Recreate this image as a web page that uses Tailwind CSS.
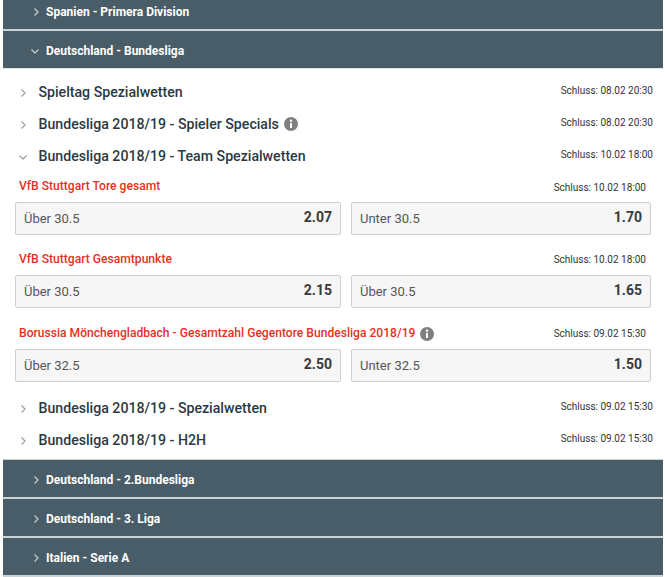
<!DOCTYPE html>
<html lang="en">

<head>
    <meta charset="UTF-8">
    <meta name="viewport" content="width=device-width, initial-scale=1.0">
    <title>Wetten</title>
    <script src="https://cdn.jsdelivr.net/npm/@tailwindcss/browser@4"></script>
</head>

<body class="bg-white font-['Roboto',sans-serif] overflow-hidden">
    <div class="w-[665px] h-[577px] overflow-hidden pl-[3px] pr-[2px]">
        <!-- Top leagues -->
        <div class="h-[29px] bg-[#485d68] flex items-center pl-[27px] text-white text-[12px] font-bold">
            <svg class="w-[12px] h-[12px] mr-[4px] -mt-[6px]" viewBox="0 0 12 12" fill="none" stroke="#c3cbcf" stroke-width="1.3"><path d="M4.5 2.5 8 6 4.5 9.5" /></svg>
            <span class="mt-[-6px]">Spanien - Primera Division</span>
        </div>
        <div class="h-[2px] bg-[#c9d3d6]"></div>
        <div class="h-[37px] bg-[#485d68] flex items-center pl-[26px] pt-[2px] text-white text-[12px] font-bold">
            <svg class="w-[12px] h-[12px] mr-[5px]" viewBox="0 0 12 12" fill="none" stroke="#c3cbcf" stroke-width="1.3"><path d="M2.5 4.5 6 8 9.5 4.5" /></svg>
            <span>Deutschland - Bundesliga</span>
        </div>

        <!-- Markets -->
        <div class="h-[391px]">
            <div class="h-[1px] bg-[#dfe5e7]"></div>
            <div class="h-[7px]"></div>
            <div class="h-[32px] flex items-center pl-[14px] pr-[10px]">
                <svg class="w-[12px] h-[12px] mr-[9.5px] mt-[2px]" viewBox="0 0 12 12" fill="none" stroke="#a3a3a3" stroke-width="1.3"><path d="M4.5 2.5 8 6 4.5 9.5" /></svg>
                <span class="text-[14.15px] font-medium text-[#2b3a42] mt-[2px]">Spieltag Spezialwetten</span>
                <span class="ml-auto text-[10px] text-[#333] -mt-[3px]">Schluss: 08.02 20:30</span>
            </div>
            <div class="h-[32px] flex items-center pl-[14px] pr-[10px]">
                <svg class="w-[12px] h-[12px] mr-[9.5px] mt-[2px]" viewBox="0 0 12 12" fill="none" stroke="#a3a3a3" stroke-width="1.3"><path d="M4.5 2.5 8 6 4.5 9.5" /></svg>
                <span class="text-[14.15px] font-medium text-[#2b3a42] mt-[2px]">Bundesliga 2018/19 - Spieler Specials</span>
                <svg class="w-[14px] h-[14px] ml-[5px]" viewBox="0 0 14 14"><circle cx="7" cy="7" r="7" fill="#808080" /><circle cx="7" cy="3.8" r="1.2" fill="#fff" /><rect x="6" y="6" width="2" height="5" fill="#fff" /></svg>
                <span class="ml-auto text-[10px] text-[#333] -mt-[3px]">Schluss: 08.02 20:30</span>
            </div>
            <div class="h-[32px] flex items-center pl-[14px] pr-[10px]">
                <svg class="w-[12px] h-[12px] mr-[9.5px] mt-[2px]" viewBox="0 0 12 12" fill="none" stroke="#a3a3a3" stroke-width="1.3"><path d="M2.5 4.5 6 8 9.5 4.5" /></svg>
                <span class="text-[14.15px] font-medium text-[#2b3a42] mt-[2px]">Bundesliga 2018/19 - Team Spezialwetten</span>
                <span class="ml-auto text-[10px] text-[#333] -mt-[3px]">Schluss: 10.02 18:00</span>
            </div>

            <!-- VfB Stuttgart Tore gesamt -->
            <div class="pl-[12px]">
                <div class="h-[30px] flex items-center pl-[4px] pr-[17px]">
                    <span class="text-[12.1px] font-medium text-[#e6311f] -mt-[2px]">VfB Stuttgart Tore gesamt</span>
                    <span class="ml-auto text-[10px] text-[#333]">Schluss: 10.02 18:00</span>
                </div>
                <div class="grid grid-cols-[326px_300px] gap-[10px]">
                    <div class="h-[33px] bg-[#f6f6f6] border border-[#cfcfcf] rounded-[2px] flex items-center justify-between pl-[8px] pr-[8px]">
                        <span class="text-[13px] text-[#555]">Über 30.5</span><span class="text-[14px] font-bold text-[#3a3a3a] -mt-[2px]">2.07</span>
                    </div>
                    <div class="h-[33px] bg-[#f6f6f6] border border-[#cfcfcf] rounded-[2px] flex items-center justify-between pl-[8px] pr-[8px]">
                        <span class="text-[13px] text-[#555]">Unter 30.5</span><span class="text-[14px] font-bold text-[#3a3a3a] -mt-[2px]">1.70</span>
                    </div>
                </div>
            </div>

            <!-- VfB Stuttgart Gesamtpunkte -->
            <div class="pl-[12px] mt-[8px]">
                <div class="h-[32px] flex items-center pl-[4px] pr-[17px]">
                    <span class="text-[12.1px] font-medium text-[#e6311f]">VfB Stuttgart Gesamtpunkte</span>
                    <span class="ml-auto text-[10px] text-[#333]">Schluss: 10.02 18:00</span>
                </div>
                <div class="grid grid-cols-[326px_300px] gap-[10px]">
                    <div class="h-[33px] bg-[#f6f6f6] border border-[#cfcfcf] rounded-[2px] flex items-center justify-between pl-[8px] pr-[8px]">
                        <span class="text-[13px] text-[#555]">Über 30.5</span><span class="text-[14px] font-bold text-[#3a3a3a] -mt-[2px]">2.15</span>
                    </div>
                    <div class="h-[33px] bg-[#f6f6f6] border border-[#cfcfcf] rounded-[2px] flex items-center justify-between pl-[8px] pr-[8px]">
                        <span class="text-[13px] text-[#555]">Über 30.5</span><span class="text-[14px] font-bold text-[#3a3a3a] -mt-[2px]">1.65</span>
                    </div>
                </div>
            </div>

            <!-- Borussia -->
            <div class="pl-[12px] mt-[8px]">
                <div class="h-[33px] flex items-center pl-[4px] pr-[17px] pt-[2px]">
                    <span class="text-[12.1px] font-medium text-[#e6311f]">Borussia Mönchengladbach - Gesamtzahl Gegentore Bundesliga 2018/19</span>
                    <svg class="w-[14px] h-[14px] ml-[5px]" viewBox="0 0 14 14"><circle cx="7" cy="7" r="7" fill="#808080" /><circle cx="7" cy="3.8" r="1.2" fill="#fff" /><rect x="6" y="6" width="2" height="5" fill="#fff" /></svg>
                    <span class="ml-auto text-[10px] text-[#333]">Schluss: 09.02 15:30</span>
                </div>
                <div class="grid grid-cols-[326px_300px] gap-[10px]">
                    <div class="h-[33px] bg-[#f6f6f6] border border-[#cfcfcf] rounded-[2px] flex items-center justify-between pl-[8px] pr-[8px]">
                        <span class="text-[13px] text-[#555]">Über 32.5</span><span class="text-[14px] font-bold text-[#3a3a3a] -mt-[2px]">2.50</span>
                    </div>
                    <div class="h-[33px] bg-[#f6f6f6] border border-[#cfcfcf] rounded-[2px] flex items-center justify-between pl-[8px] pr-[8px]">
                        <span class="text-[13px] text-[#555]">Unter 32.5</span><span class="text-[14px] font-bold text-[#3a3a3a] -mt-[2px]">1.50</span>
                    </div>
                </div>
            </div>

            <div class="h-[32px] mt-[10px] flex items-center pl-[14px] pr-[10px]">
                <svg class="w-[12px] h-[12px] mr-[9.5px] mt-[2px]" viewBox="0 0 12 12" fill="none" stroke="#a3a3a3" stroke-width="1.3"><path d="M4.5 2.5 8 6 4.5 9.5" /></svg>
                <span class="text-[14.15px] font-medium text-[#2b3a42] mt-[2px]">Bundesliga 2018/19 - Spezialwetten</span>
                <span class="ml-auto text-[10px] text-[#333] -mt-[3px]">Schluss: 09.02 15:30</span>
            </div>
            <div class="h-[32px] flex items-center pl-[14px] pr-[10px]">
                <svg class="w-[12px] h-[12px] mr-[9.5px] mt-[2px]" viewBox="0 0 12 12" fill="none" stroke="#a3a3a3" stroke-width="1.3"><path d="M4.5 2.5 8 6 4.5 9.5" /></svg>
                <span class="text-[14.15px] font-medium text-[#2b3a42] mt-[2px]">Bundesliga 2018/19 - H2H</span>
                <span class="ml-auto text-[10px] text-[#333] -mt-[3px]">Schluss: 09.02 15:30</span>
            </div>
        </div>

        <!-- Bottom leagues -->
        <div class="h-[1px] bg-[#c9d3d6]"></div>
        <div class="h-[37px] bg-[#485d68] flex items-center pl-[27px] pt-[2px] text-white text-[12px] font-bold">
            <svg class="w-[12px] h-[12px] mr-[4px]" viewBox="0 0 12 12" fill="none" stroke="#c3cbcf" stroke-width="1.3"><path d="M4.5 2.5 8 6 4.5 9.5" /></svg>
            <span>Deutschland - 2.Bundesliga</span>
        </div>
        <div class="h-[2px] bg-[#c9d3d6]"></div>
        <div class="h-[37px] bg-[#485d68] flex items-center pl-[27px] pt-[2px] text-white text-[12px] font-bold">
            <svg class="w-[12px] h-[12px] mr-[4px]" viewBox="0 0 12 12" fill="none" stroke="#c3cbcf" stroke-width="1.3"><path d="M4.5 2.5 8 6 4.5 9.5" /></svg>
            <span>Deutschland - 3. Liga</span>
        </div>
        <div class="h-[2px] bg-[#c9d3d6]"></div>
        <div class="h-[37px] bg-[#485d68] flex items-center pl-[27px] pt-[2px] text-white text-[12px] font-bold">
            <svg class="w-[12px] h-[12px] mr-[4px]" viewBox="0 0 12 12" fill="none" stroke="#c3cbcf" stroke-width="1.3"><path d="M4.5 2.5 8 6 4.5 9.5" /></svg>
            <span>Italien - Serie A</span>
        </div>
        <div class="h-[2px] bg-[#c9d3d6]"></div>
    </div>
</body>

</html>
